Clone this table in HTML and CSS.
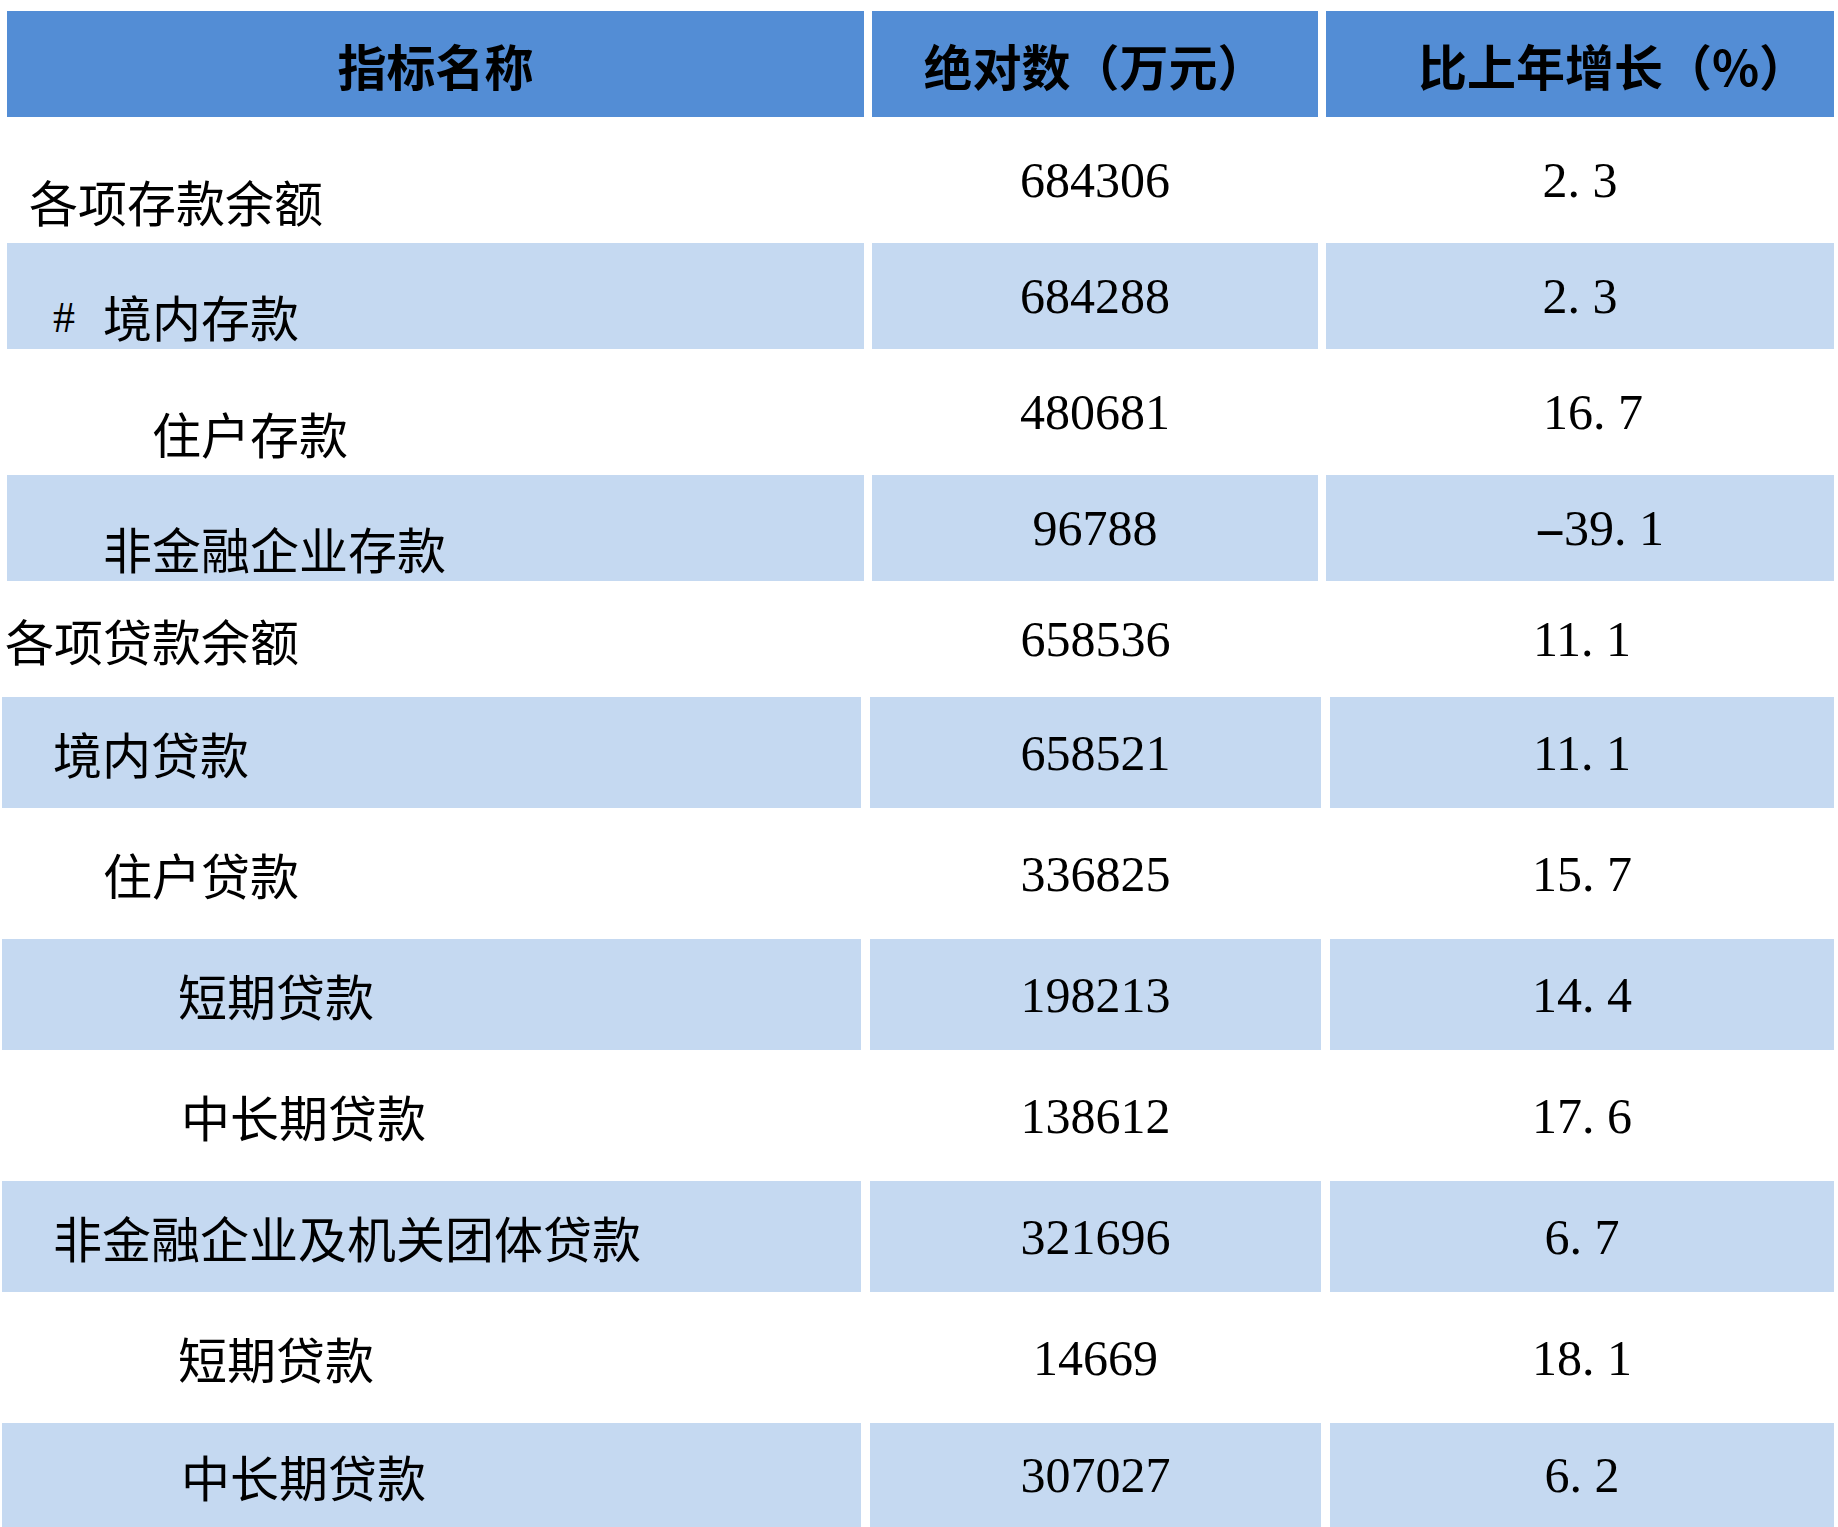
FILE: index.html
```html
<!DOCTYPE html>
<html lang="zh-CN">
<head>
<meta charset="utf-8">
<title>存贷款余额</title>
<link rel="stylesheet" href="styles.css">
</head>
<body>
<div class="sheet">
  <div class="tbl upper">
    <div class="row head">
      <div class="cell">指标名称</div>
      <div class="cell">绝对数（万元）</div>
      <div class="cell head-rate">比上年增长（%）</div>
    </div>
    <div class="row plain">
      <div class="cell label ind-1">各项存款余额</div>
      <div class="cell val">684306</div>
      <div class="cell val">2<span class="dot">.</span>3</div>
    </div>
    <div class="row alt">
      <div class="cell label ind-2"><span class="hash">#</span>境内存款</div>
      <div class="cell val">684288</div>
      <div class="cell val">2<span class="dot">.</span>3</div>
    </div>
    <div class="row plain">
      <div class="cell label ind-3">住户存款</div>
      <div class="cell val">480681</div>
      <div class="cell val shift-a">16<span class="dot">.</span>7</div>
    </div>
    <div class="row alt">
      <div class="cell label ind-4">非金融企业存款</div>
      <div class="cell val">96788</div>
      <div class="cell val shift-b"><span class="minus">-</span>39<span class="dot">.</span>1</div>
    </div>
  </div>
  <div class="tbl lower">
    <div class="row plain first">
      <div class="cell label ind-0">各项贷款余额</div>
      <div class="cell val">658536</div>
      <div class="cell val">11<span class="dot">.</span>1</div>
    </div>
    <div class="row alt">
      <div class="cell label ind-2">境内贷款</div>
      <div class="cell val">658521</div>
      <div class="cell val">11<span class="dot">.</span>1</div>
    </div>
    <div class="row plain">
      <div class="cell label ind-4">住户贷款</div>
      <div class="cell val">336825</div>
      <div class="cell val">15<span class="dot">.</span>7</div>
    </div>
    <div class="row alt">
      <div class="cell label ind-5">短期贷款</div>
      <div class="cell val">198213</div>
      <div class="cell val">14<span class="dot">.</span>4</div>
    </div>
    <div class="row plain">
      <div class="cell label ind-6">中长期贷款</div>
      <div class="cell val">138612</div>
      <div class="cell val">17<span class="dot">.</span>6</div>
    </div>
    <div class="row alt">
      <div class="cell label ind-2">非金融企业及机关团体贷款</div>
      <div class="cell val">321696</div>
      <div class="cell val">6<span class="dot">.</span>7</div>
    </div>
    <div class="row plain">
      <div class="cell label ind-5">短期贷款</div>
      <div class="cell val">14669</div>
      <div class="cell val">18<span class="dot">.</span>1</div>
    </div>
    <div class="row alt last">
      <div class="cell label ind-6">中长期贷款</div>
      <div class="cell val">307027</div>
      <div class="cell val">6<span class="dot">.</span>2</div>
    </div>
  </div>
</div>
</body>
</html>
```

FILE: styles.css
```css
html, body {
  margin: 0;
  padding: 0;
  background: #ffffff;
}

body {
  width: 1838px;
  height: 1527px;
  overflow: hidden;
  font-family: "Noto Sans CJK SC", "Noto Sans CJK TC", sans-serif;
  color: #000000;
}

.upper {
  padding-top: 11px;
  padding-left: 7px;
}

.upper .row {
  display: grid;
  grid-template-columns: 857px 446px 508px;
  column-gap: 8px;
}

.lower {
  padding-left: 2px;
}

.lower .row {
  display: grid;
  grid-template-columns: 859px 451px 504px;
  column-gap: 9px;
}

.cell {
  display: flex;
  align-items: center;
  box-sizing: border-box;
}

.head {
  height: 106px;
}

.head .cell {
  background: #538dd5;
  justify-content: center;
  font-size: 49px;
  font-weight: 700;
  line-height: 1;
}

.head .head-rate {
  padding-left: 66px;
}

.upper .plain { height: 126px; }
.upper .alt { height: 106px; }

.lower .plain { height: 131px; }
.lower .alt { height: 111px; }
.lower .first { height: 116px; }
.lower .last { height: 104px; }

.alt .cell {
  background: #c5d9f1;
}

.label {
  font-size: 49px;
  line-height: 1;
  font-weight: 400;
  white-space: nowrap;
}

.upper .label {
  align-items: flex-end;
}

.upper .plain .label { padding-bottom: 18px; }
.upper .alt .label { padding-bottom: 9px; }

.val {
  justify-content: center;
  font-family: "Liberation Serif", "Times New Roman", serif;
  font-size: 50px;
  line-height: 1;
}

.dot {
  display: inline-block;
  width: 25px;
  text-align: left;
}

.minus {
  display: inline-block;
  width: 28px;
  text-align: center;
  transform: scaleX(1.9);
}

.shift-a { padding-left: 26px; }
.shift-b { padding-left: 40px; }

.hash {
  display: inline-block;
  width: 50px;
  font-family: "Liberation Serif", serif;
  font-size: 44px;
}

.upper .ind-1 { padding-left: 22px; }
.upper .ind-2 { padding-left: 46px; }
.upper .ind-3 { padding-left: 145px; }
.upper .ind-4 { padding-left: 96px; }

.lower .ind-0 { padding-left: 3px; }
.lower .ind-2 { padding-left: 51px; }
.lower .ind-4 { padding-left: 101px; }
.lower .ind-5 { padding-left: 176px; }
.lower .ind-6 { padding-left: 179px; }
```
